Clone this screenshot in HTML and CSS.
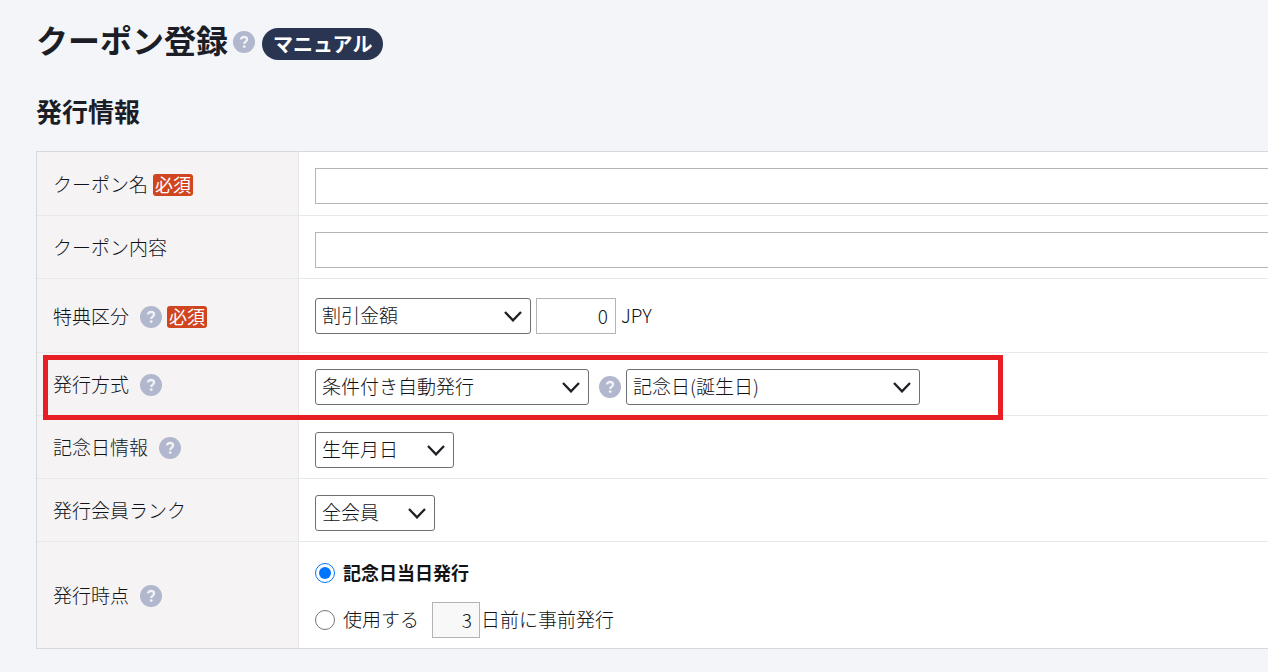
FILE: index.html
```html
<!DOCTYPE html>
<html lang="ja">
<head>
    <meta charset="UTF-8">
    <meta name="viewport" content="width=device-width, initial-scale=1.0">
    <title>クーポン登録</title>
    <link rel="stylesheet" href="styles.css">
</head>
<body>
    <svg class="sprite" aria-hidden="true">
        <symbol id="help" viewBox="0 0 22 22">
            <circle cx="11" cy="11" r="11" fill="#b1b7cc"/>
            <path d="M8 8.6C8 6.9 9.3 6 11 6s3.1 1 3.1 2.6c0 2.1-2.9 2.1-2.9 4.3" fill="none" stroke="#f0f2f7" stroke-width="2.3"/>
            <circle cx="11.2" cy="15.6" r="1.4" fill="#f0f2f7"/>
        </symbol>
        <symbol id="arrow" viewBox="0 0 18 11">
            <path d="M1 1l8 8.4L17 1" fill="none" stroke="#1f2125" stroke-width="2.3"/>
        </symbol>
    </svg>

    <main class="page">
        <header class="page-header">
            <h1>クーポン登録</h1>
            <button type="button" class="help" aria-label="ヘルプ"><svg><use href="#help"/></svg></button>
            <a href="#" class="manual">マニュアル</a>
        </header>

        <h2>発行情報</h2>
        <table class="form-table">
            <tr class="name">
                <th scope="row"><div class="label"><label for="name">クーポン名</label><span class="required">必須</span></div></th>
                <td><input type="text" id="name" class="wide"></td>
            </tr>
            <tr>
                <th scope="row"><div class="label"><label for="content">クーポン内容</label></div></th>
                <td><input type="text" id="content" class="wide"></td>
            </tr>
            <tr class="benefit">
                <th scope="row">
                    <div class="label">
                        <label for="benefit">特典区分</label>
                        <button type="button" class="help spaced" aria-label="ヘルプ"><svg><use href="#help"/></svg></button>
                        <span class="required">必須</span>
                    </div>
                </th>
                <td>
                    <div class="fields">
                        <span class="select benefit-select">
                            <select id="benefit"><option>割引金額</option></select>
                            <svg><use href="#arrow"/></svg>
                        </span>
                        <input type="text" id="amount" class="amount" value="0" aria-label="割引金額">
                        <label for="amount" class="unit">JPY</label>
                    </div>
                </td>
            </tr>
            <tr>
                <th scope="row" class="highlighted">
                    <div class="label">
                        <label for="method">発行方式</label>
                        <button type="button" class="help spaced" aria-label="ヘルプ"><svg><use href="#help"/></svg></button>
                    </div>
                    <div class="highlight"></div>
                </th>
                <td>
                    <div class="fields">
                        <span class="select method-select">
                            <select id="method"><option>条件付き自動発行</option></select>
                            <svg><use href="#arrow"/></svg>
                        </span>
                        <button type="button" class="help method-help" aria-label="ヘルプ"><svg><use href="#help"/></svg></button>
                        <span class="select condition-select">
                            <select aria-label="発行条件"><option>記念日(誕生日)</option></select>
                            <svg><use href="#arrow"/></svg>
                        </span>
                    </div>
                </td>
            </tr>
            <tr>
                <th scope="row">
                    <div class="label">
                        <label for="anniversary">記念日情報</label>
                        <button type="button" class="help spaced" aria-label="ヘルプ"><svg><use href="#help"/></svg></button>
                    </div>
                </th>
                <td>
                    <span class="select anniversary-select">
                        <select id="anniversary"><option>生年月日</option></select>
                        <svg><use href="#arrow"/></svg>
                    </span>
                </td>
            </tr>
            <tr>
                <th scope="row"><div class="label"><label for="rank">発行会員ランク</label></div></th>
                <td>
                    <span class="select rank-select">
                        <select id="rank"><option>全会員</option></select>
                        <svg><use href="#arrow"/></svg>
                    </span>
                </td>
            </tr>
            <tr>
                <th scope="row">
                    <div class="label">
                        <span>発行時点</span>
                        <button type="button" class="help spaced" aria-label="ヘルプ"><svg><use href="#help"/></svg></button>
                    </div>
                </th>
                <td>
                    <div class="radio-row">
                        <input type="radio" name="timing" id="same-day" checked>
                        <label for="same-day" class="selected">記念日当日発行</label>
                    </div>
                    <div class="radio-row">
                        <input type="radio" name="timing" id="before">
                        <label for="before">使用する</label>
                        <input type="text" id="days" class="days" value="3" aria-label="日数">
                        <label for="days">日前に事前発行</label>
                    </div>
                </td>
            </tr>
        </table>
    </main>
</body>
</html>
```
FILE: styles.css
```css
* {
    box-sizing: border-box;
}
body {
    margin: 0;
    background-color: #f3f5f9;
    color: #111318;
    font-family: "Noto Sans CJK JP", sans-serif;
    font-size: 19px;
    font-weight: 300;
    line-height: 28px;
    overflow-x: hidden;
}
.sprite {
    display: none;
}
.page {
    padding: 20px 0 24px 36px;
}
.page-header {
    display: flex;
    align-items: center;
}
h1 {
    margin: 0 5px 0 0;
    padding-bottom: 6px;
    font-size: 32px;
    line-height: 38px;
    font-weight: 700;
    color: #1b1e26;
}
h2 {
    margin: 26px 0 20px;
    font-size: 26px;
    line-height: 41px;
    font-weight: 700;
    color: #1b1e26;
}
.manual {
    margin: 4px 0 0 7px;
    padding: 0 11px;
    border-radius: 16px;
    background-color: #2a3552;
    color: #fff;
    font-size: 20px;
    line-height: 32px;
    font-weight: 700;
    text-decoration: none;
}
.help {
    flex: none;
    width: 22px;
    height: 22px;
    padding: 0;
    border: none;
    background: none;
    cursor: pointer;
}
.help svg {
    display: block;
    width: 22px;
    height: 22px;
}
.form-table {
    width: calc(100% + 40px);
    border: 1px solid #d5d9da;
    border-top: none;
    border-spacing: 0;
    background-color: #fff;
}
th,
td {
    border-top: 1px solid #e8e8ea;
    text-align: left;
    font-weight: 300;
}
tr:first-child th,
tr:first-child td {
    border-top-color: #d5d9da;
}
th {
    width: 262px;
    padding: 2px 16px 0;
    border-right: 1px solid #e8e8ea;
    background-color: #f5f3f4;
}
td {
    padding: 16px 16px 10px;
}
.name td {
    padding-bottom: 11px;
}
.label,
.fields,
.radio-row {
    display: flex;
    align-items: center;
}
.label label,
.label > span:first-child,
.unit {
    padding-bottom: 2px;
}
.spaced {
    margin-left: 11px;
}
.required {
    margin-left: 5px;
    padding: 0 2px 2px;
    border-radius: 3px;
    background-color: #cf4520;
    color: #fff;
    font-size: 18px;
    line-height: 20px;
    font-weight: 400;
}
input[type="text"],
select {
    height: 36px;
    color: #111318;
    font-family: inherit;
    font-size: 19px;
    font-weight: 300;
}
input[type="text"] {
    padding: 0 7px 2px;
    border: 1px solid #b4b4b4;
    background-color: #fff;
}
.wide {
    display: block;
    width: 100%;
}
.select {
    display: grid;
    align-items: center;
}
.select select,
.select svg {
    grid-area: 1 / 1;
}
.select select {
    width: 100%;
    padding: 0 6px 4px;
    border: 1px solid #707070;
    border-radius: 3px;
    background-color: #fff;
    appearance: none;
}
.select svg {
    justify-self: end;
    width: 18px;
    height: 11px;
    margin-right: 9px;
    pointer-events: none;
}
.benefit td {
    padding: 19px 16px 18px;
}
.benefit-select {
    width: 216px;
}
.fields .amount {
    width: 80px;
    margin: 0 5px;
    text-align: right;
}
.method-select {
    width: 274px;
}
.method-help {
    margin: 0 5px 0 10px;
}
.condition-select {
    width: 294px;
}
.anniversary-select {
    width: 139px;
}
.rank-select {
    width: 120px;
}
.highlighted {
    position: relative;
}
/* frame drawn over the whole row */
.highlight {
    position: absolute;
    z-index: 1;
    top: 2px;
    left: 6px;
    width: 960px;
    height: 65px;
    border: 5px solid #e81e25;
    pointer-events: none;
}
.radio-row input[type="radio"] {
    width: 20px;
    height: 20px;
    margin: 0 8px 0 0;
}
.radio-row label {
    padding-bottom: 2px;
}
.radio-row + .radio-row {
    margin-top: 14px;
}
.selected {
    font-size: 18px;
    font-weight: 700;
}
.radio-row .days {
    width: 48px;
    margin: 0 1px 0 13px;
    background-color: #f8f8f8;
    text-align: right;
}
```
